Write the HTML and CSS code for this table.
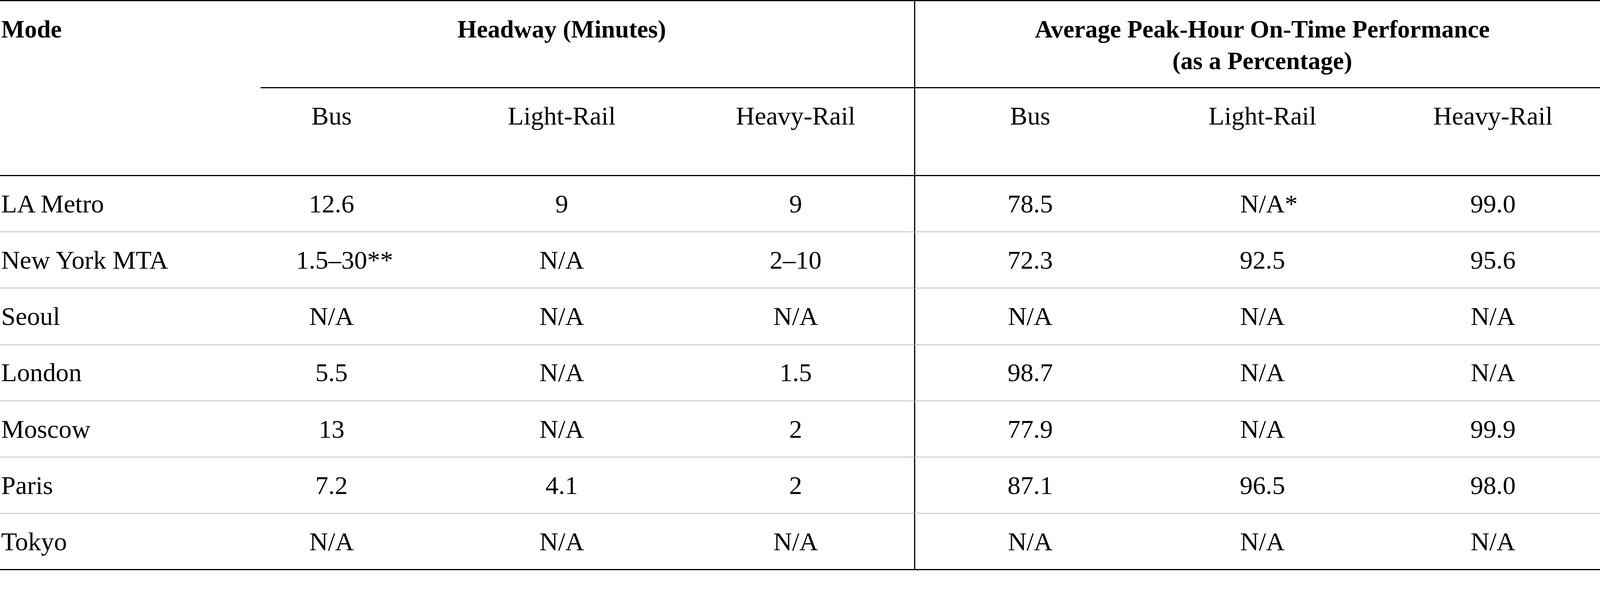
FILE: index.html
```html
<!DOCTYPE html>
<html lang="en">
<head>
<meta charset="utf-8">
<title>Transit Headway and On-Time Performance</title>
<link rel="stylesheet" href="styles.css">
</head>
<body>
<div class="tbl" role="table">
  <div class="cell hd mode" role="columnheader">Mode</div>
  <div class="cell hd headway" role="columnheader">Headway (Minutes)</div>
  <div class="cell hd otp" role="columnheader">Average Peak-Hour On-Time Performance<br>(as a Percentage)</div>

  <div class="cell sub c2" role="columnheader">Bus</div>
  <div class="cell sub c3" role="columnheader">Light-Rail</div>
  <div class="cell sub c4" role="columnheader">Heavy-Rail</div>
  <div class="cell sub c5" role="columnheader">Bus</div>
  <div class="cell sub c6" role="columnheader">Light-Rail</div>
  <div class="cell sub c7" role="columnheader">Heavy-Rail</div>

  <div class="cell row c1">LA Metro</div>
  <div class="cell row c2">12.6</div>
  <div class="cell row c3">9</div>
  <div class="cell row c4">9</div>
  <div class="cell row c5">78.5</div>
  <div class="cell row c6">N/A<span class="fn">*</span></div>
  <div class="cell row c7">99.0</div>

  <div class="cell row c1">New York MTA</div>
  <div class="cell row c2">1.5–30<span class="fn">**</span></div>
  <div class="cell row c3">N/A</div>
  <div class="cell row c4">2–10</div>
  <div class="cell row c5">72.3</div>
  <div class="cell row c6">92.5</div>
  <div class="cell row c7">95.6</div>

  <div class="cell row c1">Seoul</div>
  <div class="cell row c2">N/A</div>
  <div class="cell row c3">N/A</div>
  <div class="cell row c4">N/A</div>
  <div class="cell row c5">N/A</div>
  <div class="cell row c6">N/A</div>
  <div class="cell row c7">N/A</div>

  <div class="cell row c1">London</div>
  <div class="cell row c2">5.5</div>
  <div class="cell row c3">N/A</div>
  <div class="cell row c4">1.5</div>
  <div class="cell row c5">98.7</div>
  <div class="cell row c6">N/A</div>
  <div class="cell row c7">N/A</div>

  <div class="cell row c1">Moscow</div>
  <div class="cell row c2">13</div>
  <div class="cell row c3">N/A</div>
  <div class="cell row c4">2</div>
  <div class="cell row c5">77.9</div>
  <div class="cell row c6">N/A</div>
  <div class="cell row c7">99.9</div>

  <div class="cell row c1">Paris</div>
  <div class="cell row c2">7.2</div>
  <div class="cell row c3">4.1</div>
  <div class="cell row c4">2</div>
  <div class="cell row c5">87.1</div>
  <div class="cell row c6">96.5</div>
  <div class="cell row c7">98.0</div>

  <div class="cell row last c1">Tokyo</div>
  <div class="cell row last c2">N/A</div>
  <div class="cell row last c3">N/A</div>
  <div class="cell row last c4">N/A</div>
  <div class="cell row last c5">N/A</div>
  <div class="cell row last c6">N/A</div>
  <div class="cell row last c7">N/A</div>
</div>
</body>
</html>
```
FILE: styles.css
```css
:root {
  /* one unit = one pixel of the 4261px-wide design */
  --u: calc(100vw / 4261);
}

html, body {
  margin: 0;
  padding: 0;
  background: #fff;
  overflow: hidden;
}

.tbl {
  width: 100%;
  display: grid;
  grid-template-columns:
    calc(560 * var(--u))
    calc(646 * var(--u))
    calc(580 * var(--u))
    calc(648 * var(--u))
    calc(616 * var(--u))
    calc(624 * var(--u))
    1fr;
  border-top: calc(4 * var(--u)) solid #000;
  border-bottom: calc(4 * var(--u)) solid #000;
  font-family: "Liberation Serif", "Times New Roman", serif;
  color: #000;
  box-sizing: border-box;
}

.cell {
  box-sizing: border-box;
  line-height: calc(85 * var(--u));
  font-size: calc(69 * var(--u));
  text-align: center;
  white-space: nowrap;
}

.hd {
  font-weight: 700;
  font-size: calc(66 * var(--u));
  padding-top: calc(32 * var(--u));
}

.mode {
  grid-column: 1;
  grid-row: 1 / span 2;
  text-align: left;
  padding-left: calc(3 * var(--u));
  border-bottom: calc(4 * var(--u)) solid #000;
}

.headway {
  grid-column: 2 / span 3;
  grid-row: 1;
  margin-left: calc(134 * var(--u));
  padding-right: calc(136 * var(--u));
  border-bottom: calc(4 * var(--u)) solid #000;
}

.otp {
  grid-column: 5 / span 3;
  grid-row: 1;
  padding-left: calc(25 * var(--u));
  padding-bottom: calc(27 * var(--u));
  border-left: calc(4 * var(--u)) solid #000;
  border-bottom: calc(4 * var(--u)) solid #000;
}

.sub {
  grid-row: 2;
  padding-top: calc(31 * var(--u));
  height: calc(234 * var(--u));
  border-bottom: calc(4 * var(--u)) solid #000;
}

.row {
  padding-top: calc(31 * var(--u));
  padding-bottom: calc(30 * var(--u));
  height: calc(150 * var(--u));
  border-bottom: calc(4 * var(--u)) solid #d3d3d3;
}

.row.last {
  height: calc(146 * var(--u));
  border-bottom: none;
}

.c1 { grid-column: 1; text-align: left; padding-left: calc(3 * var(--u)); }
.c2 { grid-column: 2; }
.c3 { grid-column: 3; }
.c4 { grid-column: 4; padding-left: calc(18 * var(--u)); }
.c5 { grid-column: 5; border-left: calc(4 * var(--u)) solid #000; }
.c6 { grid-column: 6; }
.c7 { grid-column: 7; padding-left: calc(17 * var(--u)); }

.fn {
  display: inline-block;
  width: 0;
  white-space: nowrap;
  text-align: left;
}
```
